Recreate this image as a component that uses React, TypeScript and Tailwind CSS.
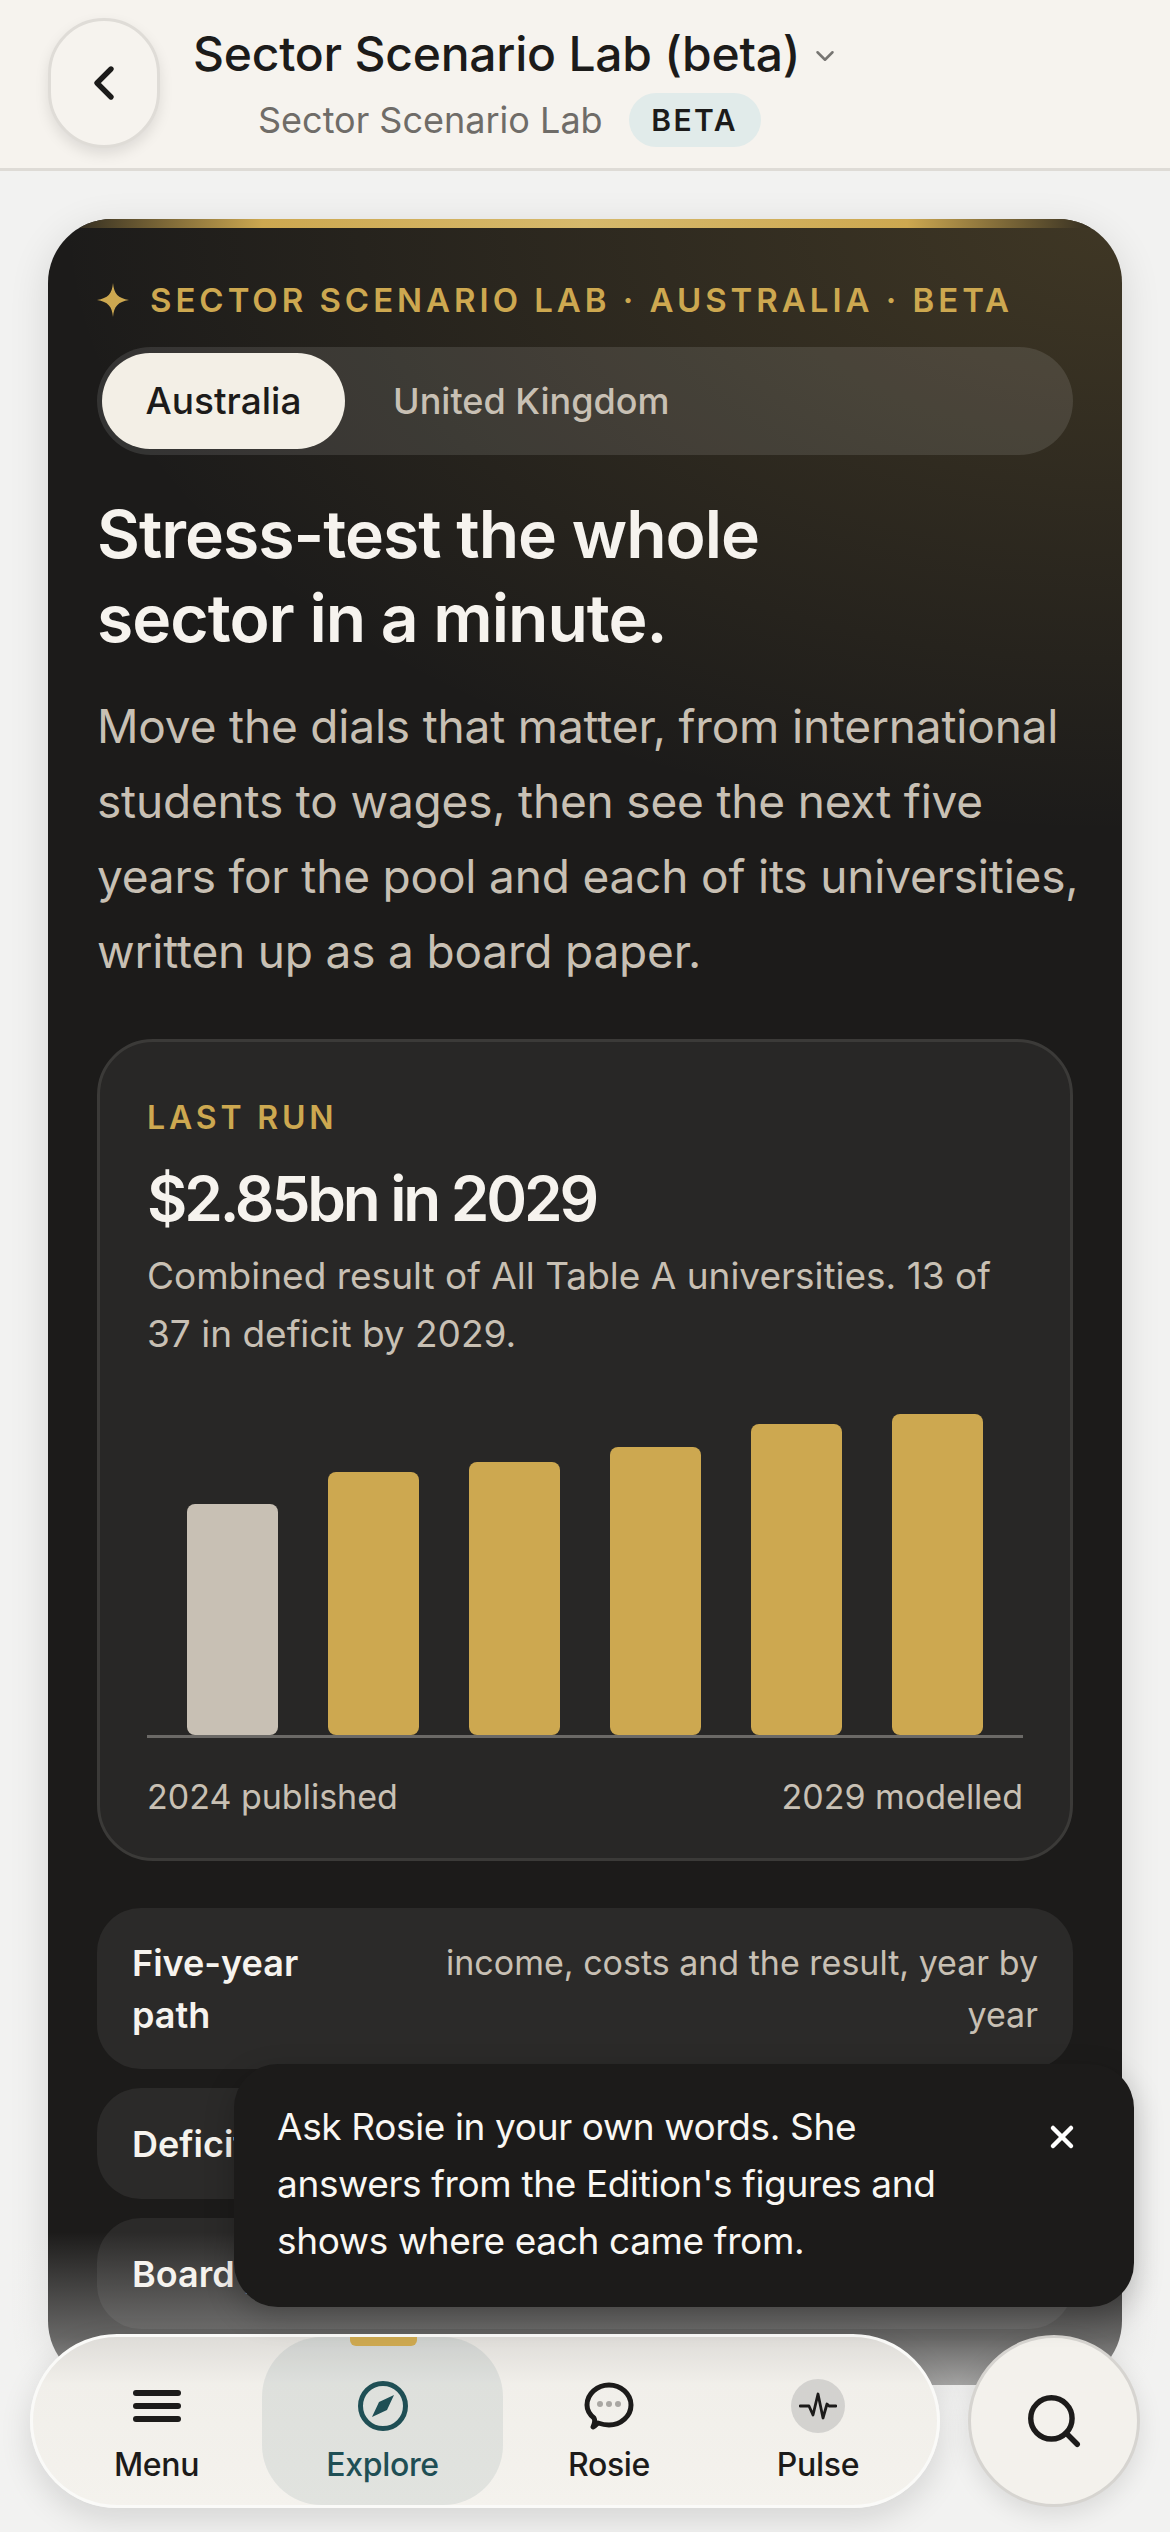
import { Search, X, ChevronLeft, ChevronDown } from 'lucide-react';

const bars = [
  { year: 2024, height: 231, published: true },
  { year: 2025, height: 263, published: false },
  { year: 2026, height: 273, published: false },
  { year: 2027, height: 288, published: false },
  { year: 2028, height: 311, published: false },
  { year: 2029, height: 321, published: false }
];

const rows = [
  { title: 'Five-year path', detail: 'income, costs and the result, year by year', tall: true },
  { title: 'Deficit map', detail: '', tall: false },
  { title: 'Board paper', detail: '', tall: false }
];

function Header() {
  return (
    <header className="flex h-[171px] items-start border-b-[3px] border-[#dedbd6] bg-[#f6f3ee] pl-[48px] pt-[18px]">
      <button className="flex h-[130px] w-[112px] items-center justify-center rounded-full border-[3px] border-[#dfdcd7] bg-[#f6f3ee] shadow-[0_6px_14px_rgba(0,0,0,0.1)]">
        <ChevronLeft size={56} strokeWidth={2.3} className="text-[#1c1b1a]" />
      </button>
      <div className="ml-[33px]">
        <div className="mt-[6px] flex items-center">
          <h1 className="text-[48px] leading-[60px] font-medium tracking-[-0.005em] text-[#1c1b1a]">Sector Scenario Lab (beta)</h1>
          <ChevronDown size={30} className="ml-[10px] mt-[4px] text-[#777572]" />
        </div>
        <div className="ml-[65px] mt-[9px] flex items-center">
          <span className="text-[36px] leading-[54px] text-[#6f6c68]">Sector Scenario Lab</span>
          <span className="ml-[26px] flex h-[54px] w-[132px] items-center justify-center rounded-full bg-[#e1ebea] text-[30px] font-semibold tracking-[0.08em] text-[#1c1b1a]">BETA</span>
        </div>
      </div>
    </header>
  );
}

function Chart() {
  return (
    <div className="mt-[51px]">
      <div className="flex h-[324px] items-end justify-between border-b-[3px] border-[#6b6966] px-[40px]">
        {bars.map((bar) => (
          <div
            key={bar.year}
            className={bar.published ? 'w-[91px] rounded-[8px] bg-[#c8c0b4]' : 'w-[91px] rounded-[8px] bg-[#cda850]'}
            style={{ height: bar.height }}
          />
        ))}
      </div>
      <div className="mt-[34px] flex justify-between text-[34px] leading-[50px] text-[#c8c0b4]">
        <span>2024 published</span>
        <span>2029 modelled</span>
      </div>
    </div>
  );
}

function Scenario() {
  return (
    <section className="relative mx-[48px] mt-[48px] h-[2166px] overflow-hidden rounded-[64px] bg-[#1c1b1a] px-[49px] pt-[65px] shadow-[0_10px_40px_rgba(0,0,0,0.12)]">
      <div className="absolute inset-x-0 top-0 h-[620px] bg-[radial-gradient(ellipse_at_100%_0%,rgba(205,168,80,0.2),rgba(205,168,80,0)_70%)]" />
      <div className="absolute inset-x-0 top-0 h-[9px] bg-[linear-gradient(90deg,#1c1b1a,#cda850_20%,#d6b96c_50%,#cda850_80%,#1c1b1a)]" />
      <div className="relative">
        <div className="flex h-[32px] items-center">
          <svg width="32" height="34" viewBox="0 0 32 34" className="shrink-0">
            <path d="M16 0 C17 11 21 15 32 17 C21 19 17 23 16 34 C15 23 11 19 0 17 C11 15 15 11 16 0 Z" fill="#cda850" />
          </svg>
          <span className="ml-[21px] text-[33px] leading-[40px] font-semibold tracking-[0.12em] text-[#cda850]">SECTOR SCENARIO LAB · AUSTRALIA · BETA</span>
        </div>
        <div className="mt-[31px] flex h-[108px] items-center rounded-full bg-white/[0.11] pl-[5px]">
          <span className="flex h-[96px] w-[243px] items-center justify-center rounded-full bg-[#f3efe6] text-[37px] font-medium text-[#1c1b1a]">Australia</span>
          <span className="ml-[48px] text-[36px] font-medium text-[#c8c0b4]">United Kingdom</span>
        </div>
        <h2 className="mt-[37px] text-[66px] leading-[84px] font-semibold tracking-[-0.015em] text-[#f6f3ee]">
          Stress-test the whole
          <br />
          sector in a minute.
        </h2>
        <p className="mt-[29px] w-[1000px] text-[46px] leading-[75px] tracking-[-0.004em] text-[#c8c0b4]">
          Move the dials that matter, from international students to wages, then see the next five years for the pool and each of its universities, written up as a board paper.
        </p>
        <div className="mt-[50px] h-[822px] rounded-[56px] border-[3px] border-[#3b3a38] bg-[#282726] px-[47px] pt-[56px]">
          <div className="text-[32px] leading-[40px] font-semibold tracking-[0.12em] text-[#cda850]">LAST RUN</div>
          <div className="mt-[21px] text-[62px] leading-[80px] font-semibold tracking-[-0.05em] text-[#f6f3ee]">$2.85bn in 2029</div>
          <p className="mt-[8px] text-[37px] leading-[58px] text-[#c8c0b4]">
            Combined result of All Table A universities. 13 of 37 in deficit by 2029.
          </p>
          <Chart />
        </div>
        <div className="mt-[47px] flex flex-col gap-[19px]">
          {rows.map((row) => (
            <div key={row.title} className={row.tall ? 'flex h-[161px] items-center justify-between gap-[30px] rounded-[44px] bg-[#2b2a29] px-[35px]' : 'flex h-[111px] items-center justify-between gap-[30px] rounded-[44px] bg-[#2b2a29] px-[35px]'}>
              <span className={row.tall ? 'w-[240px] shrink-0 text-[36px] leading-[52px] font-semibold text-[#f6f3ee]' : 'shrink-0 text-[36px] leading-[52px] font-semibold whitespace-nowrap text-[#f6f3ee]'}>{row.title}</span>
              {row.detail && <span className="text-right text-[34px] leading-[52px] text-[#c8c0b4]">{row.detail}</span>}
            </div>
          ))}
        </div>
      </div>
    </section>
  );
}

function MenuIcon() {
  return (
    <svg width="50" height="36" viewBox="0 0 50 36" fill="currentColor">
      <rect x="1" y="2" width="48" height="6" rx="3" />
      <rect x="1" y="15" width="48" height="6" rx="3" />
      <rect x="1" y="28" width="48" height="6" rx="3" />
    </svg>
  );
}

function RosieIcon() {
  return (
    <svg width="50" height="48" viewBox="0 0 50 48" fill="none">
      <path d="M9 45 C11 41 11 38 10 36 C5 32 3 28 3 23 C3 12 13 3 25 3 C37 3 47 12 47 23 C47 34 37 43 25 43 C21 43 17 42 14 41 C12 43 11 44 9 45 Z" stroke="#1c1b1a" strokeWidth="5" strokeLinejoin="round" />
      <circle cx="16" cy="22" r="3" fill="#a9a7a3" />
      <circle cx="25" cy="22" r="3" fill="#a9a7a3" />
      <circle cx="34" cy="22" r="3" fill="#a9a7a3" />
    </svg>
  );
}

function CompassIcon() {
  return (
    <svg width="50" height="50" viewBox="0 0 50 50" fill="none">
      <circle cx="25" cy="25" r="22.5" stroke="#1f4f55" strokeWidth="5" />
      <path d="M36 14 L29 29 L14 36 L21 21 Z" fill="#1f4f55" />
    </svg>
  );
}

function PulseIcon() {
  return (
    <div className="flex h-[54px] w-[54px] items-center justify-center rounded-full bg-[#d3d2cf]">
      <svg width="38" height="30" viewBox="0 0 38 30" fill="none">
        <path d="M1 15 H10 L14 24 L19 3 L24 27 L28 13 L30 15 H37" stroke="#1c1b1a" strokeWidth="2.8" strokeLinejoin="round" strokeLinecap="round" />
      </svg>
    </div>
  );
}

function NavItem({ label, icon, active, className }: { label: string; icon: React.ReactNode; active?: boolean; className: string }) {
  return (
    <div className={`${className} flex h-full flex-col items-center pt-[42px] ${active ? 'text-[#1f4f55]' : 'text-[#1c1b1a]'}`}>
      <div className="flex h-[54px] items-center justify-center">{icon}</div>
      <span className="mt-[10px] text-[32px] leading-[44px] font-medium tracking-[-0.01em]">{label}</span>
    </div>
  );
}

function BottomNav() {
  return (
    <div className="absolute inset-x-0 bottom-0 h-[300px]">
      <div className="absolute inset-0 bg-[linear-gradient(180deg,rgba(242,242,241,0),rgba(242,242,241,0.35)_35%,rgba(242,242,241,1)_72%)]" />
      <div className="absolute left-[30px] top-[102px] flex h-[174px] w-[910px] rounded-full border-[3px] border-[#fafaf8] bg-[linear-gradient(180deg,#dedcd8,#f1efea_28%,#f4f2ed)] shadow-[0_12px_32px_rgba(0,0,0,0.12)]">
        <NavItem label="Menu" className="w-[229px] pl-[18px]" icon={<MenuIcon />} />
        <div className="relative h-full w-[241px] rounded-[60px] bg-[#1f4f55]/[0.09]">
          <div className="absolute left-[88px] top-0 h-[9px] w-[67px] rounded-b-[6px] bg-[#cda850]" />
          <NavItem label="Explore" active className="w-full" icon={<CompassIcon />} />
        </div>
        <NavItem label="Rosie" className="w-[212px]" icon={<RosieIcon />} />
        <NavItem label="Pulse" className="w-[206px]" icon={<PulseIcon />} />
      </div>
      <div className="absolute left-[968px] top-[103px] flex h-[172px] w-[172px] items-center justify-center rounded-full border-[3px] border-[#d6d4d0] bg-[#f3f1ec] shadow-[0_8px_24px_rgba(0,0,0,0.1)]">
        <Search size={62} strokeWidth={2.1} className="text-[#1c1b1a]" />
      </div>
    </div>
  );
}

function RosieToast() {
  return (
    <div className="absolute left-[234px] top-[2064px] flex h-[243px] w-[900px] rounded-[44px] bg-[#1c1b1a] pl-[43px] pr-[54px] pt-[34px] shadow-[0_10px_30px_rgba(0,0,0,0.22)]">
      <p className="w-[720px] text-[37px] leading-[57px] tracking-[-0.01em] text-[#f9f7f3]">
        Ask Rosie in your own words. She answers from the Edition's figures and shows where each came from.
      </p>
      <X size={36} strokeWidth={3} className="ml-auto mt-[21px] text-white" />
    </div>
  );
}

export default function App() {
  return (
    <div className="relative h-[2532px] w-[1170px] overflow-hidden bg-[#f2f2f1] font-['Inter','Noto_Sans',sans-serif]">
      <Header />
      <Scenario />
      <BottomNav />
      <RosieToast />
    </div>
  );
}
